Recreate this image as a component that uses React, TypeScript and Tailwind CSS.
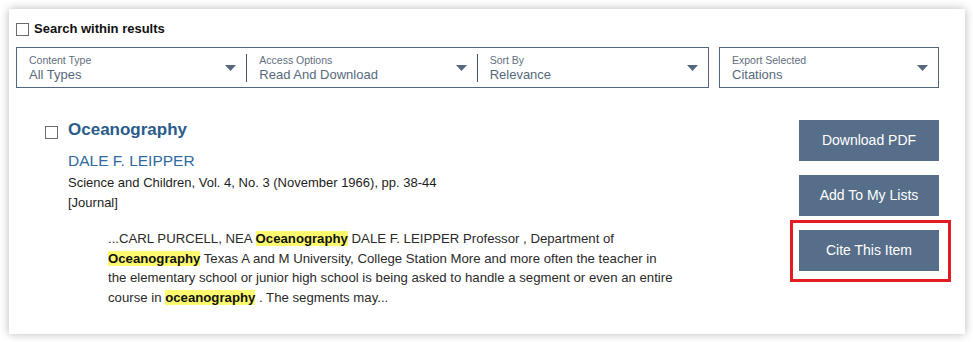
import React from 'react';

const font = { fontFamily: '"Liberation Sans", Arial, sans-serif' };

function Caret() {
  return (
    <svg width="11" height="6" viewBox="0 0 11 6" className="shrink-0">
      <path d="M0 0h11L5.5 6z" fill="#55687d" />
    </svg>
  );
}

function Box() {
  return <span className="inline-block w-[13px] h-[13px] border border-[#6b6b6b] bg-white shrink-0" />;
}

interface FilterProps { label: string; value: string; divider?: boolean; }

function Filter({ label, value, divider }: FilterProps) {
  return (
    <div className="flex-1 flex items-center">
      <div className="flex-1 flex items-center pl-[12px] pr-[10px]">
        <div className="flex-1 flex flex-col pt-[2px]">
          <span className="text-[10.5px] leading-[12px] text-[#5f6e7e]">{label}</span>
          <span className="text-[13px] leading-[17px] text-[#56697c]">{value}</span>
        </div>
        <Caret />
      </div>
      {divider && <div className="w-px h-[28px] bg-[#44566b]" />}
    </div>
  );
}

const hl = 'bg-[#fdfa6e] font-bold text-[#111]';

export default function App() {
  return (
    <div className="w-[973px] h-[342px] bg-white p-[9px]" style={font}>
      <div className="w-[956px] h-[325px] bg-white shadow-[0_0_9px_rgba(0,0,0,0.28)] pl-[7px] pr-[26px] pt-[13px]">
        <label className="flex items-center gap-[5px] h-[14px]">
          <Box />
          <span className="text-[13px] font-bold text-[#111]">Search within results</span>
        </label>

        <div className="flex gap-[10px] mt-[11px]">
          <div className="flex w-[693px] h-[41px] border border-[#51657c]">
            <Filter label="Content Type" value="All Types" divider />
            <Filter label="Access Options" value="Read And Download" divider />
            <Filter label="Sort By" value="Relevance" />
          </div>
          <div className="flex w-[220px] h-[41px] border border-[#51657c]">
            <Filter label="Export Selected" value="Citations" />
          </div>
        </div>

        <div className="flex justify-between mt-[33px]">
          <div className="flex pl-[29px]">
            <div className="pt-[1px]"><Box /></div>
            <div className="pl-[10px] -mt-[1px]">
              <h2 className="text-[17px] leading-[20px] font-bold text-[#2b5c8a]">Oceanography</h2>
              <p className="text-[15.5px] leading-[20px] text-[#2f6aa0] mt-[11px]">DALE F. LEIPPER</p>
              <p className="text-[13px] leading-[20px] text-[#1d1d1d] mt-[2px]">
                Science and Children, Vol. 4, No. 3 (November 1966), pp. 38-44
              </p>
              <p className="text-[13px] leading-[20px] text-[#1d1d1d]">[Journal]</p>
              <p className="text-[13.2px] leading-[19.5px] text-[#2a2a2a] pl-[40px] mt-[16px] w-[640px] whitespace-nowrap">
                ...CARL PURCELL, NEA <span className={hl}>Oceanography</span> DALE F. LEIPPER Professor , Department of
                <br />
                <span className={hl}>Oceanography</span> Texas A and M University, College Station More and more often the teacher in
                <br />
                the elementary school or junior high school is being asked to handle a segment or even an entire
                <br />
                course in <span className={hl}>oceanography</span> . The segments may...
              </p>
            </div>
          </div>

          <div className="flex flex-col gap-[14px] w-[140px] -mt-[1px]">
            <button className="h-[41px] bg-[#566e89] text-white text-[14px]">Download PDF</button>
            <button className="h-[41px] bg-[#566e89] text-white text-[14px]">Add To My Lists</button>
            <div className="relative">
              <div className="absolute -left-[9px] -top-[10px] -right-[12px] -bottom-[11px] border-[3px] border-[#e31b23]" />
              <button className="relative w-full h-[41px] bg-[#566e89] text-white text-[14px]">Cite This Item</button>
            </div>
          </div>
        </div>
      </div>
    </div>
  );
}
